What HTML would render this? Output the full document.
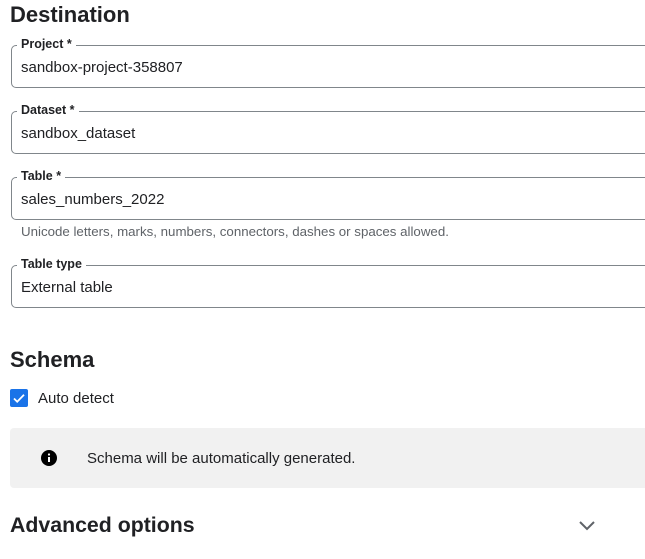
<!DOCTYPE html>
<html><head><style>
body{margin:0;width:645px;height:559px;overflow:hidden;background:#fff;font-family:"Liberation Sans",sans-serif;color:#202124;position:relative}
.a{position:absolute}
h{position:absolute;font-weight:bold;font-size:22px;left:10px;color:#202124}
.box{position:absolute;left:11px;width:660px;border:1px solid #80868b;border-radius:5px;height:41px}
.lab{position:absolute;left:5px;top:-9px;background:#fff;padding:0 4px;font-size:12.5px;font-weight:bold;line-height:15px}
.val{position:absolute;left:9px;top:13px;font-size:15px}
</style></head><body>
<h style="top:2px">Destination</h>
<div class="box" style="top:45px"><div class="lab">Project *</div><div class="val">sandbox-project-358807</div></div>
<div class="box" style="top:111px"><div class="lab">Dataset *</div><div class="val">sandbox_dataset</div></div>
<div class="box" style="top:177px"><div class="lab">Table *</div><div class="val">sales_numbers_2022</div></div>
<div class="a" style="left:21px;top:224px;font-size:13.3px;color:#5f6368">Unicode letters, marks, numbers, connectors, dashes or spaces allowed.</div>
<div class="box" style="top:265px"><div class="lab">Table type</div><div class="val">External table</div></div>
<h style="top:347px">Schema</h>
<div class="a" style="left:10px;top:389px;width:18px;height:18px;background:#1a73e8;border-radius:2px">
<svg width="18" height="18" viewBox="0 0 18 18"><path d="M4 9.5l3.2 3.2L14 5.8" stroke="#fff" stroke-width="1.8" fill="none"/></svg></div>
<div class="a" style="left:38px;top:390px;font-size:15px">Auto detect</div>
<div class="a" style="left:10px;top:428px;width:660px;height:60px;background:#f1f1f1;border-radius:4px"></div>
<svg class="a" style="left:40px;top:449px" width="18" height="18" viewBox="0 0 18 18"><circle cx="9" cy="9" r="8" fill="#000"/><rect x="8" y="8" width="2" height="5" fill="#fff"/><circle cx="9" cy="5.5" r="1.1" fill="#fff"/></svg>
<div class="a" style="left:87px;top:450px;font-size:15px">Schema will be automatically generated.</div>
<h style="top:513px;font-size:21.3px">Advanced options</h>
<svg class="a" style="left:578px;top:518px" width="18" height="14" viewBox="0 0 18 14"><path d="M2 4l7 7 7-7" stroke="#5f6368" stroke-width="2" fill="none"/></svg>
</body></html>
